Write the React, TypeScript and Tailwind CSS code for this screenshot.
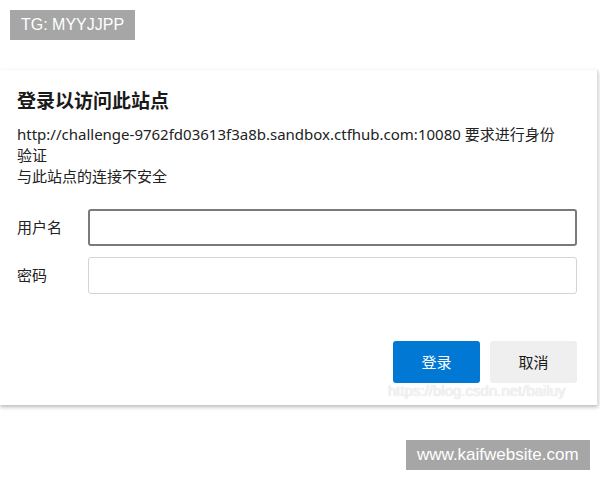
import React from 'react'

const font = { fontFamily: '"Noto Sans", "Noto Sans CJK SC", sans-serif' }

const Badge = ({ text, className }: { text: string; className: string }) => (
  <div
    className={`absolute bg-[#a6a6a6] text-white leading-[30px] px-[11px] ${className}`}
    style={{ fontFamily: '"Liberation Sans", Arial, sans-serif' }}
  >
    {text}
  </div>
)

export default function App() {
  return (
    <div className="relative w-[600px] h-[480px] bg-white overflow-hidden" style={font}>
      <Badge text="TG: MYYJJPP" className="left-[10px] top-[10px] text-[16px]" />

      {/* 登录对话框 */}
      <div className="mt-[70px] w-[598px] bg-white border-r border-[#e0e0e0] shadow-[0_2px_4px_rgba(0,0,0,0.28)] pl-[17px] pr-[20px] pt-[16px] pb-[22px]">
        <h1 className="text-[19px] leading-[28px] font-bold text-[#1a1a1a]" style={{ fontFamily: '"Noto Sans CJK SC", sans-serif' }}>
          登录以访问此站点
        </h1>
        <div className="mt-[10px] text-[15px] leading-[21px] text-[#222]">
          <p>
            http://challenge-9762fd03613f3a8b.sandbox.ctfhub.com:10080 要求进行身份
            <br />
            验证
          </p>
          <p>与此站点的连接不安全</p>
        </div>

        <div className="mt-[22px] flex flex-col gap-[11px]">
          <div className="flex items-center">
            <label className="w-[71px] text-[15px] text-[#222]">用户名</label>
            <div className="w-[489px] h-[37px] border-2 border-[#7a7a7a] rounded-[3px] bg-white" />
          </div>
          <div className="flex items-center">
            <label className="w-[71px] text-[15px] text-[#222]">密码</label>
            <div className="w-[489px] h-[37px] border border-[#d4d4d4] rounded-[3px] bg-white" />
          </div>
        </div>

        <div className="mt-[47px] flex justify-end gap-[10px]">
          <button className="w-[87px] h-[42px] rounded-[3px] bg-[#0078d4] text-white text-[15px]">登录</button>
          <button className="w-[87px] h-[42px] rounded-[3px] bg-[#efefef] text-[#1a1a1a] text-[15px]">取消</button>
        </div>
      </div>

      {/* 水印 */}
      <div
        className="absolute left-[388px] top-[380px] text-[15px] text-white/80"
        style={{ fontFamily: '"Liberation Sans", Arial, sans-serif', textShadow: '0 0 1px rgba(0,0,0,0.25)' }}
      >
        https://blog.csdn.net/bailuy
      </div>

      <Badge text="www.kaifwebsite.com" className="left-[406px] top-[440px] text-[17px]" />
    </div>
  )
}
